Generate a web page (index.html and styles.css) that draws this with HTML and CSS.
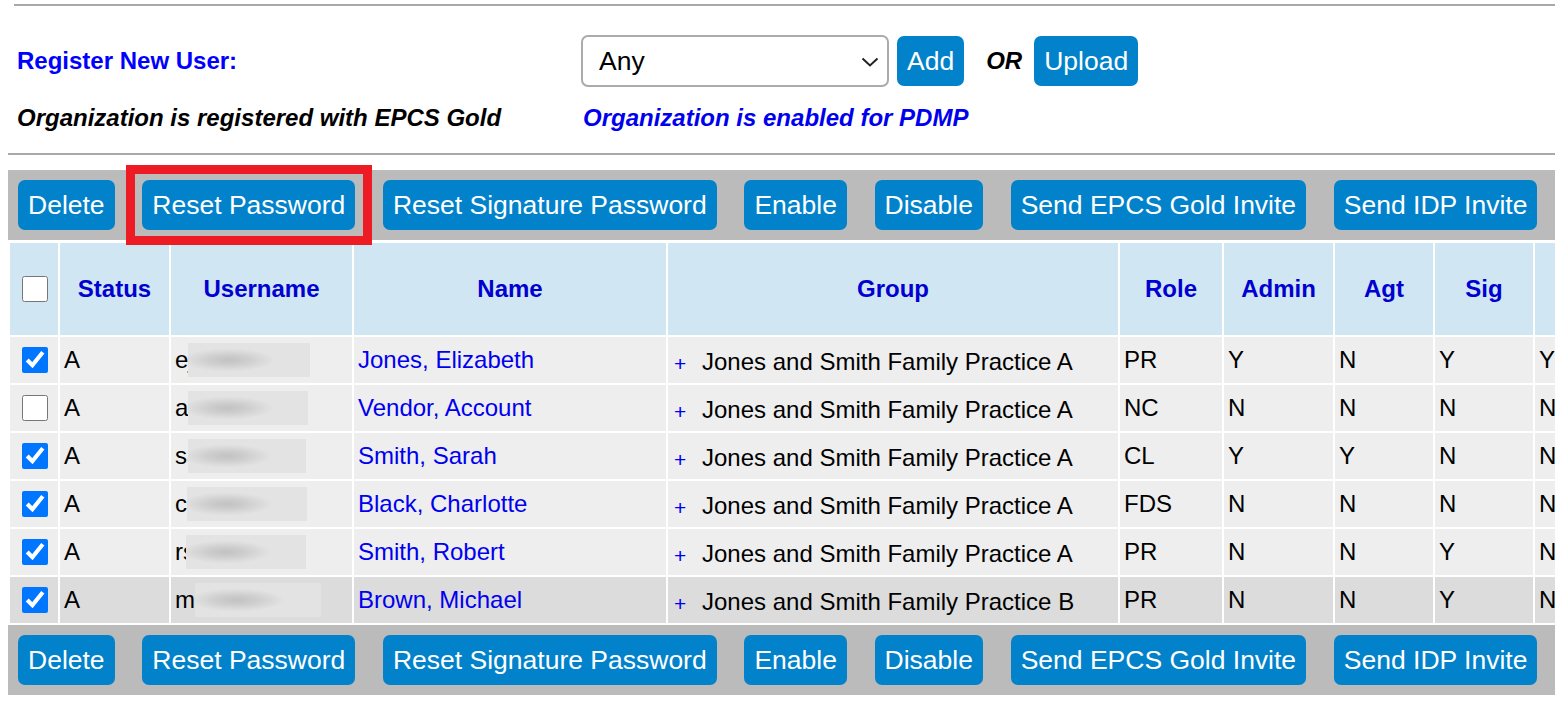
FILE: index.html
```html
<!DOCTYPE html>
<html lang="en">
<head>
<meta charset="utf-8">
<title>Users</title>
<link rel="stylesheet" href="styles.css">
</head>
<body>
<div class="page">
  <div class="rule rule-top"></div>
  <div class="register">
    <div class="reg-label">Register New User:</div>
    <div class="reg-controls">
      <div class="select-wrap">
        <select class="role-select"><option>Any</option></select>
        <svg class="chev" width="18" height="10" viewBox="0 0 18 10"><path d="M1.5 1.5 L9 8.5 L16.5 1.5" fill="none" stroke="#222" stroke-width="2"/></svg>
      </div>
      <button class="btn btn-add">Add</button>
      <span class="or">OR</span>
      <button class="btn">Upload</button>
    </div>
    <div class="org-note">Organization is registered with EPCS Gold</div>
    <div class="org-note org-blue">Organization is enabled for PDMP</div>
  </div>
  <div class="rule rule-mid"></div>

  <div class="grid-wrap">
    <div class="toolbar">
      <button class="btn">Delete</button>
      <span class="hl"><button class="btn">Reset Password</button><span class="hl-box"></span></span>
      <button class="btn">Reset Signature Password</button>
      <button class="btn">Enable</button>
      <button class="btn">Disable</button>
      <button class="btn">Send EPCS Gold Invite</button>
      <button class="btn">Send IDP Invite</button>
    </div>
    <table class="users">
      <thead>
        <tr>
          <th class="c-cb"><input type="checkbox"></th>
          <th class="c-status">Status</th>
          <th class="c-user">Username</th>
          <th class="c-name">Name</th>
          <th class="c-group">Group</th>
          <th class="c-role">Role</th>
          <th class="c-admin">Admin</th>
          <th class="c-agt">Agt</th>
          <th class="c-sig">Sig</th>
          <th class="c-more"></th>
        </tr>
      </thead>
      <tbody>
        <tr>
          <td class="cb"><input type="checkbox" checked></td>
          <td>A</td>
          <td><span class="un">ej</span><span class="blur b1"></span></td>
          <td><a class="name">Jones, Elizabeth</a></td>
          <td class="grp"><span class="plus">+</span><span class="grp-text">Jones and Smith Family Practice A</span></td>
          <td>PR</td><td>Y</td><td>N</td><td>Y</td><td>Y</td>
        </tr>
        <tr>
          <td class="cb"><input type="checkbox"></td>
          <td>A</td>
          <td><span class="un">av</span><span class="blur b2"></span></td>
          <td><a class="name">Vendor, Account</a></td>
          <td class="grp"><span class="plus">+</span><span class="grp-text">Jones and Smith Family Practice A</span></td>
          <td>NC</td><td>N</td><td>N</td><td>N</td><td>N</td>
        </tr>
        <tr>
          <td class="cb"><input type="checkbox" checked></td>
          <td>A</td>
          <td><span class="un">sa</span><span class="blur b3"></span></td>
          <td><a class="name">Smith, Sarah</a></td>
          <td class="grp"><span class="plus">+</span><span class="grp-text">Jones and Smith Family Practice A</span></td>
          <td>CL</td><td>Y</td><td>Y</td><td>N</td><td>N</td>
        </tr>
        <tr>
          <td class="cb"><input type="checkbox" checked></td>
          <td>A</td>
          <td><span class="un">cb</span><span class="blur b4"></span></td>
          <td><a class="name">Black, Charlotte</a></td>
          <td class="grp"><span class="plus">+</span><span class="grp-text">Jones and Smith Family Practice A</span></td>
          <td>FDS</td><td>N</td><td>N</td><td>N</td><td>N</td>
        </tr>
        <tr>
          <td class="cb"><input type="checkbox" checked></td>
          <td>A</td>
          <td><span class="un">rs</span><span class="blur b5"></span></td>
          <td><a class="name">Smith, Robert</a></td>
          <td class="grp"><span class="plus">+</span><span class="grp-text">Jones and Smith Family Practice A</span></td>
          <td>PR</td><td>N</td><td>N</td><td>Y</td><td>N</td>
        </tr>
        <tr class="hover">
          <td class="cb"><input type="checkbox" checked></td>
          <td>A</td>
          <td><span class="un">mb</span><span class="blur b6"></span></td>
          <td><a class="name">Brown, Michael</a></td>
          <td class="grp"><span class="plus">+</span><span class="grp-text">Jones and Smith Family Practice B</span></td>
          <td>PR</td><td>N</td><td>N</td><td>Y</td><td>N</td>
        </tr>
      </tbody>
    </table>
    <div class="toolbar">
      <button class="btn">Delete</button>
      <button class="btn">Reset Password</button>
      <button class="btn">Reset Signature Password</button>
      <button class="btn">Enable</button>
      <button class="btn">Disable</button>
      <button class="btn">Send EPCS Gold Invite</button>
      <button class="btn">Send IDP Invite</button>
    </div>
  </div>
</div>
</body>
</html>
```

FILE: styles.css
```css
html, body {
  margin: 0;
  padding: 0;
  background: #ffffff;
  overflow: hidden;
}
body {
  font-family: "Liberation Sans", Arial, sans-serif;
  font-size: 24px;
  color: #000;
}
.page {
  width: 1555px;
  height: 703px;
  overflow: hidden;
}
.rule {
  border-top: 2px solid #a9a9a9;
}
.rule-top {
  margin: 4px 0 0 14px;
}
.rule-mid {
  margin: 21px 0 0 8px;
}
.register {
  display: grid;
  grid-template-columns: 564px 1fr;
  grid-template-rows: 52px 28px;
  row-gap: 17px;
  align-items: center;
  padding: 29px 0 0 17px;
}
.reg-label {
  color: #0000ff;
  font-weight: bold;
  font-size: 24px;
}
.reg-controls {
  display: flex;
  align-items: center;
}
.select-wrap {
  position: relative;
  width: 308px;
  height: 52px;
}
.role-select {
  appearance: none;
  -webkit-appearance: none;
  width: 100%;
  height: 100%;
  box-sizing: border-box;
  border: 2px solid #ababab;
  border-radius: 7px;
  background: #fff;
  padding: 0 0 0 16px;
  font-family: "Liberation Sans", Arial, sans-serif;
  font-size: 26.5px;
  color: #000;
}
.chev {
  position: absolute;
  right: 10px;
  top: 22px;
}
.btn {
  height: 50px;
  box-sizing: border-box;
  padding: 0 10px;
  border: 0;
  border-radius: 7px;
  background: #0282ca;
  color: #fff;
  font-family: "Liberation Sans", Arial, sans-serif;
  font-size: 26.5px;
  line-height: 50px;
  white-space: nowrap;
}
.btn-add {
  margin-left: 8px;
}
.or {
  font-weight: bold;
  font-style: italic;
  font-size: 24px;
  margin: 0 12px 0 22px;
}
.org-note {
  font-weight: bold;
  font-style: italic;
  font-size: 24px;
  line-height: 28px;
}
.org-blue {
  color: #0000ee;
  padding-left: 2px;
}

.grid-wrap {
  margin: 15px 0 0 8px;
  width: 1669px;
}
.toolbar {
  display: flex;
  gap: 27.7px;
  height: 70px;
  box-sizing: border-box;
  padding: 10px 10px;
  background: #bbbbbb;
}
.hl {
  position: relative;
  display: flex;
}
.hl-box {
  position: absolute;
  top: -15px;
  bottom: -15px;
  left: -16px;
  right: -17px;
  border: 9px solid #ed1c24;
  pointer-events: none;
}

.users {
  border-collapse: separate;
  border-spacing: 2px;
  table-layout: fixed;
  width: 1669px;
  margin-top: 1px;
  background: #fff;
}
.users th {
  box-sizing: border-box;
  height: 92px;
  background: #d1e6f3;
  color: #0000d0;
  font-weight: bold;
  font-size: 24px;
  text-align: center;
  vertical-align: middle;
  padding: 0;
}
.users td {
  height: 46px;
  box-sizing: border-box;
  background: #eeeeee;
  padding: 0 4px;
  vertical-align: middle;
  white-space: nowrap;
  overflow: hidden;
  font-size: 24px;
  line-height: 28px;
}
.users tr.hover td {
  background: #dcdcdc;
}
.c-cb { width: 48px; }
.c-status { width: 109px; }
.c-user { width: 181px; }
.c-name { width: 312px; }
.c-group { width: 450px; }
.c-role { width: 102px; }
.c-admin { width: 109px; }
.c-agt { width: 98px; }
.c-sig { width: 98px; }
.c-more { width: 140px; }

.users input[type="checkbox"] {
  width: 26px;
  height: 26px;
  display: block;
  margin: 0 auto;
  position: relative;
  left: 1px;
}
.users td.cb {
  padding: 0;
  text-align: center;
}
.un {
  display: inline-block;
  vertical-align: middle;
}
.blur {
  display: inline-block;
  vertical-align: middle;
  height: 34px;
  width: 122px;
  background: radial-gradient(ellipse 38% 34% at 33% 50%, #c2c2c2 0%, #cdcdcd 40%, #e3e3e3 100%);
}
.b1 { margin-left: -6px; width: 122px; }
.b2 { margin-left: -12px; width: 120px; }
.b3 { margin-left: -12px; width: 118px; }
.b4 { margin-left: -13px; width: 120px; }
.b5 { margin-left: -9px; width: 120px; }
.b6 { margin-left: -13px; width: 126px; }

.name {
  color: #0000ee;
  text-decoration: none;
}
.users td.grp {
  padding-left: 6px;
}
.plus {
  color: #0000ee;
  font-size: 21px;
  font-weight: normal;
  display: inline-block;
  width: 28px;
  vertical-align: middle;
  position: relative;
  top: 3px;
}
.grp-text {
  display: inline-block;
  vertical-align: middle;
  position: relative;
  top: 1px;
}
```
